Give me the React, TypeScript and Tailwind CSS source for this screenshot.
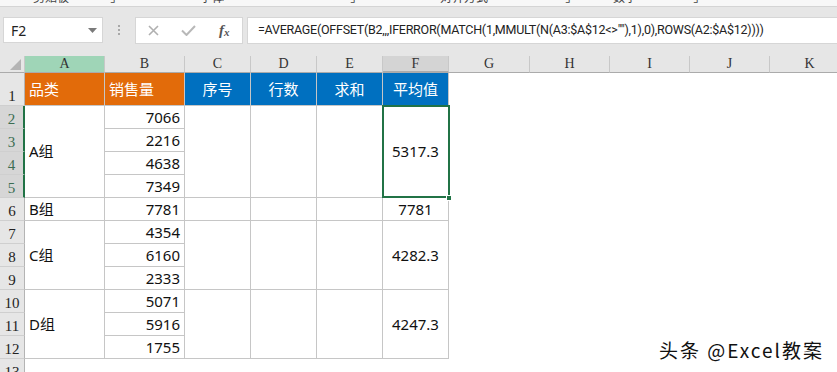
import React from "react";

const colHeaders: { label: string; cls: string }[] = [
  { label: "A", cls: "col-start-2 bg-[#9fd5b7]" },
  { label: "B", cls: "col-start-3 bg-[#e6e6e6]" },
  { label: "C", cls: "col-start-4 bg-[#e6e6e6]" },
  { label: "D", cls: "col-start-5 bg-[#e6e6e6]" },
  { label: "E", cls: "col-start-6 bg-[#e6e6e6]" },
  { label: "F", cls: "col-start-7 bg-[#d4d4d4] border-b-2 border-b-[#217346]" },
  { label: "G", cls: "col-start-8 bg-[#e6e6e6]" },
  { label: "H", cls: "col-start-9 bg-[#e6e6e6]" },
  { label: "I", cls: "col-start-10 bg-[#e6e6e6]" },
  { label: "J", cls: "col-start-11 bg-[#e6e6e6]" },
  { label: "K", cls: "col-start-12 bg-[#e6e6e6]" },
];

const rowHeaders: { label: string; cls: string; sel?: boolean }[] = [
  { label: "1", cls: "row-start-2" },
  { label: "2", cls: "row-start-3", sel: true },
  { label: "3", cls: "row-start-4", sel: true },
  { label: "4", cls: "row-start-5", sel: true },
  { label: "5", cls: "row-start-6", sel: true },
  { label: "6", cls: "row-start-7" },
  { label: "7", cls: "row-start-8" },
  { label: "8", cls: "row-start-9" },
  { label: "9", cls: "row-start-10" },
  { label: "10", cls: "row-start-11" },
  { label: "11", cls: "row-start-12" },
  { label: "12", cls: "row-start-13" },
  { label: "13", cls: "row-start-14" },
];

const bValues: { v: string; cls: string }[] = [
  { v: "7066", cls: "row-start-3" },
  { v: "2216", cls: "row-start-4" },
  { v: "4638", cls: "row-start-5" },
  { v: "7349", cls: "row-start-6" },
  { v: "7781", cls: "row-start-7" },
  { v: "4354", cls: "row-start-8" },
  { v: "6160", cls: "row-start-9" },
  { v: "2333", cls: "row-start-10" },
  { v: "5071", cls: "row-start-11" },
  { v: "5916", cls: "row-start-12" },
  { v: "1755", cls: "row-start-13" },
];

const groupRows = [
  { rows: "row-start-3 row-span-4", a: "A组", f: "5317.3" },
  { rows: "row-start-7", a: "B组", f: "7781" },
  { rows: "row-start-8 row-span-3", a: "C组", f: "4282.3" },
  { rows: "row-start-11 row-span-3", a: "D组", f: "4247.3" },
];

const cell = "border-r border-b border-[#c6c6c6] bg-white";

export default function App() {
  return (
    <div className="relative w-[837px] h-[372px] overflow-hidden bg-white font-['Noto_Sans','Noto_Sans_CJK_SC',sans-serif] text-black">
      {/* ribbon remnant */}
      <div className="h-[7px] bg-[#f7f7f7] border-b border-[#d4d4d4] overflow-hidden flex text-[12px] leading-[12px] text-[#444]">
        <div className="w-[33px]" />
        <div className="w-[77px] -mt-[8px]">剪贴板</div>
        <div className="w-[90px] -mt-[8px]">⌟</div>
        <div className="w-[150px] -mt-[8px]">字体</div>
        <div className="w-[90px] -mt-[8px]">⌟</div>
        <div className="w-[125px] -mt-[8px]">对齐方式</div>
        <div className="w-[48px] -mt-[8px]">⌟</div>
        <div className="w-[80px] -mt-[8px]">数字</div>
        <div className="w-[40px] -mt-[8px]">⌟</div>
      </div>

      {/* formula bar */}
      <div className="h-[49px] bg-[#e6e6e6] flex items-start pt-[10px]">
        <div className="ml-[3px] w-[100px] h-[26px] bg-white border border-[#d6d6d6] flex items-center justify-between pl-[7px] pr-[5px]">
          <span className="text-[14px] text-[#222]">F2</span>
          <svg width="9" height="5" viewBox="0 0 9 5">
            <polygon points="0,0 9,0 4.5,5" fill="#7a7a7a" />
          </svg>
        </div>
        <div className="w-[32px] h-[26px] flex flex-col items-center justify-center gap-[2px]">
          <div className="w-[2px] h-[2px] bg-[#a8a8a8]" />
          <div className="w-[2px] h-[2px] bg-[#a8a8a8]" />
          <div className="w-[2px] h-[2px] bg-[#a8a8a8]" />
        </div>
        <div className="w-[108px] h-[27px] bg-white border border-[#d6d6d6] flex items-center">
          <div className="w-[36px] flex items-center justify-center">
            <svg width="11" height="11" viewBox="0 0 11 11">
              <path d="M1 1 L10 10 M10 1 L1 10" stroke="#b0b0b0" strokeWidth="1.6" fill="none" />
            </svg>
          </div>
          <div className="w-[36px] flex items-center justify-center">
            <svg width="15" height="11" viewBox="0 0 15 11">
              <path d="M1 5.5 L5.5 10 L14 1" stroke="#b8b8b8" strokeWidth="2" fill="none" />
            </svg>
          </div>
          <div className="w-[36px] flex items-center justify-center text-[#555] font-['Liberation_Serif',serif] italic font-bold text-[15px] leading-none">
            f<span className="text-[11px] mt-[3px]">x</span>
          </div>
        </div>
        <div className="ml-[4px] flex-1 h-[27px] bg-white border border-[#d6d6d6] border-r-0 flex items-center pl-[10px] font-['Roboto','Noto_Sans',sans-serif] text-[12.5px] tracking-[-0.25px] text-[#222] whitespace-nowrap">
          =AVERAGE(OFFSET(B2,,,IFERROR(MATCH(1,MMULT(N(A3:$A$12&lt;&gt;""),1),0),ROWS(A2:$A$12))))
        </div>
      </div>

      {/* sheet grid */}
      <div className="grid grid-cols-[25px_80px_80px_66px_66px_66px_66px_81px_80px_80px_80px_80px] grid-rows-[17px_33px_repeat(12,23px)]">
        {/* corner */}
        <div className="col-start-1 row-start-1 bg-[#e6e6e6] border-r border-r-[#c8c8c8] border-b border-b-[#ababab] flex items-end justify-end pr-[3px] pb-[2px]">
          <svg width="11" height="11" viewBox="0 0 11 11">
            <polygon points="11,0 11,11 0,11" fill="#b4b4b4" />
          </svg>
        </div>
        {colHeaders.map((c) => (
          <div
            key={c.label}
            className={`row-start-1 ${c.cls} border-r border-r-[#c8c8c8] border-b border-b-[#ababab] flex items-center justify-center font-['Liberation_Serif',serif] text-[14px] leading-none text-[#333]`}
          >
            {c.label}
          </div>
        ))}

        {rowHeaders.map((r) => (
          <div
            key={r.label}
            className={`col-start-1 ${r.cls} ${
              r.sel
                ? "bg-[#d6d6d6] text-[#3b6d52] border-r-2 border-r-[#217346]"
                : "bg-[#e6e6e6] text-[#222] border-r border-r-[#b4b4b4]"
            } border-b border-b-[#cfcfcf] flex items-end justify-center pb-[1px] font-['Liberation_Serif',serif] text-[15px] leading-none`}
          >
            {r.label}
          </div>
        ))}

        {/* header row (row 1) */}
        <div className="col-start-2 row-start-2 bg-[#e26b0a] border-r border-b border-[#c6c6c6] text-white text-[15px] flex items-center pl-[4px]">
          品类
        </div>
        <div className="col-start-3 row-start-2 bg-[#e26b0a] border-r border-b border-[#c6c6c6] text-white text-[15px] flex items-center pl-[4px]">
          销售量
        </div>
        <div className="col-start-4 row-start-2 bg-[#0070c0] border-r border-b border-[#c6c6c6] text-white text-[15px] flex items-center justify-center">
          序号
        </div>
        <div className="col-start-5 row-start-2 bg-[#0070c0] border-r border-b border-[#c6c6c6] text-white text-[15px] flex items-center justify-center">
          行数
        </div>
        <div className="col-start-6 row-start-2 bg-[#0070c0] border-r border-b border-[#c6c6c6] text-white text-[15px] flex items-center justify-center">
          求和
        </div>
        <div className="col-start-7 row-start-2 bg-[#0070c0] border-r border-b border-[#c6c6c6] text-white text-[15px] flex items-center justify-center">
          平均值
        </div>

        {/* B values */}
        {bValues.map((b) => (
          <div
            key={b.cls}
            className={`col-start-3 ${b.cls} ${cell} flex items-center justify-end pr-[4px] text-[15px] text-[#111]`}
          >
            {b.v}
          </div>
        ))}

        {/* groups */}
        {groupRows.map((g) => (
          <React.Fragment key={g.a}>
            <div className={`col-start-2 ${g.rows} ${cell} flex items-center pl-[4px] text-[15px] text-[#111]`}>{g.a}</div>
            <div className={`col-start-4 ${g.rows} ${cell}`} />
            <div className={`col-start-5 ${g.rows} ${cell}`} />
            <div className={`col-start-6 ${g.rows} ${cell}`} />
            <div
              className={`col-start-7 ${g.rows} ${cell} flex items-center justify-center text-[15px] text-[#111] ${
                g.a === "A组" ? "relative z-10" : ""
              }`}
            >
              {g.f}
              {g.a === "A组" && (
                <>
                  <div className="absolute left-[-1px] top-[-1px] right-[-2px] bottom-[-1px] border-2 border-[#217346]" />
                  <div className="absolute right-[-4px] bottom-[-4px] w-[6px] h-[6px] bg-[#217346] border border-white" />
                </>
              )}
            </div>
          </React.Fragment>
        ))}
      </div>

      {/* watermark */}
      <div className="absolute right-[13px] bottom-[13px] text-[19px] leading-none tracking-[2px] text-[#111] font-['Noto_Sans_CJK_SC',sans-serif] [text-shadow:0_0_2px_#fff,0_0_2px_#fff,1px_1px_1px_#fff]">
        头条 @Excel教案
      </div>
    </div>
  );
}
